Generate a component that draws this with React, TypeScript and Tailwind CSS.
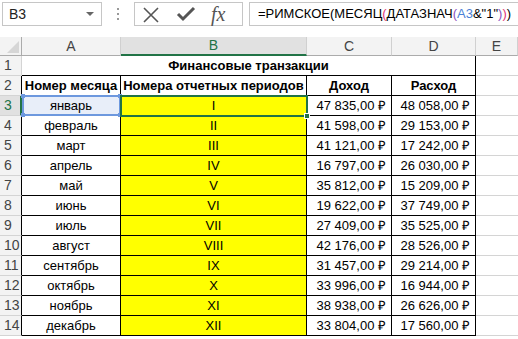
import React from 'react';

const rows = [
  { m: 'январь', r: 'I', inc: '47 835,00 ₽', exp: '48 058,00 ₽' },
  { m: 'февраль', r: 'II', inc: '41 598,00 ₽', exp: '29 153,00 ₽' },
  { m: 'март', r: 'III', inc: '41 121,00 ₽', exp: '17 242,00 ₽' },
  { m: 'апрель', r: 'IV', inc: '16 797,00 ₽', exp: '26 030,00 ₽' },
  { m: 'май', r: 'V', inc: '35 812,00 ₽', exp: '15 209,00 ₽' },
  { m: 'июнь', r: 'VI', inc: '19 622,00 ₽', exp: '37 749,00 ₽' },
  { m: 'июль', r: 'VII', inc: '27 409,00 ₽', exp: '35 525,00 ₽' },
  { m: 'август', r: 'VIII', inc: '42 176,00 ₽', exp: '28 526,00 ₽' },
  { m: 'сентябрь', r: 'IX', inc: '31 457,00 ₽', exp: '29 214,00 ₽' },
  { m: 'октябрь', r: 'X', inc: '33 996,00 ₽', exp: '16 944,00 ₽' },
  { m: 'ноябрь', r: 'XI', inc: '38 938,00 ₽', exp: '26 626,00 ₽' },
  { m: 'декабрь', r: 'XII', inc: '33 804,00 ₽', exp: '17 560,00 ₽' },
];

const font = { fontFamily: '"Liberation Sans", Arial, sans-serif' };

function FormulaBar() {
  return (
    <div className="h-[37px] bg-white flex items-start pt-[2px] pl-[2px]">
      <div className="shrink-0 w-[100px] h-[24px] border border-[#c6c6c6] flex items-center justify-between pl-[6px] pr-[7px] text-[14px] text-[#222]">
        <span>B3</span>
        <span className="w-0 h-0 border-l-[4px] border-r-[4px] border-t-[4px] border-l-transparent border-r-transparent border-t-[#666]" />
      </div>
      <div className="shrink-0 w-[32px] h-[24px] flex flex-col items-center justify-center gap-[3px]">
        <span className="w-[2px] h-[2px] bg-[#999]" />
        <span className="w-[2px] h-[2px] bg-[#999]" />
        <span className="w-[2px] h-[2px] bg-[#999]" />
      </div>
      <div className="shrink-0 w-[109px] h-[24px] border border-[#c6c6c6] flex items-center">
        <svg width="36" height="22" viewBox="0 0 36 22" className="shrink-0">
          <path d="M9 5 L23 19 M23 5 L9 19" stroke="#555" strokeWidth="1.6" fill="none" />
        </svg>
        <svg width="36" height="22" viewBox="0 0 36 22" className="shrink-0">
          <path d="M7 11 L12 16 L23 5" stroke="#555" strokeWidth="3" fill="none" />
        </svg>
        <span className="ml-[4px] text-[20px] leading-none italic text-[#555]" style={{ fontFamily: '"Liberation Serif", serif' }}>
          fx
        </span>
      </div>
      <div className="ml-[6px] flex-1 min-w-0 overflow-hidden h-[24px] border border-[#c6c6c6] border-r-0 flex items-center pl-[8px] text-[13px] text-black whitespace-nowrap">
        =РИМСКОЕ(МЕСЯЦ<span className="text-[#e2377a]">(</span>ДАТАЗНАЧ<span className="text-[#8c4fc0]">(</span>
        <span className="text-[#4a7fd6]">A3</span>&amp;"1"<span className="text-[#8c4fc0]">)</span>
        <span className="text-[#e2377a]">)</span>)
      </div>
    </div>
  );
}

export default function App() {
  const head = 'h-[19px] bg-[#f3f3f3] border-r border-b border-[#d0d0d0] border-b-[#ababab] flex items-center justify-center text-[14px] text-[#444]';
  const rowHead = 'h-[20px] bg-[#f3f3f3] border-b border-[#d4d4d4] flex items-center pl-[4px] text-[14px] text-[#444]';
  const cell = 'h-[20px] border-r border-b border-black flex items-center text-[13px] text-black whitespace-nowrap overflow-hidden';
  const gray = 'h-[20px] border-b border-[#d4d4d4]';

  return (
    <div className="w-[518px] h-[339px] bg-white overflow-hidden relative" style={font}>
      <FormulaBar />
      <div className="grid grid-cols-[22px_99px_186px_85px_84px_42px]">
        <div className="h-[19px] bg-[#f3f3f3] border-r border-b border-[#ababab] flex items-end justify-end pr-[2px] pb-[2px]">
          <svg width="12" height="12" viewBox="0 0 12 12">
            <path d="M12 0 L12 12 L0 12 Z" fill="#d6d6d6" />
          </svg>
        </div>
        <div className={head}>A</div>
        <div className="h-[19px] bg-[#e1e1e1] border-r border-[#d0d0d0] border-b-2 border-b-[#217346] flex items-center justify-center text-[14px] text-[#217346]">B</div>
        <div className={head}>C</div>
        <div className={head}>D</div>
        <div className={head}>E</div>

        <div className={`${rowHead} border-r border-r-[#d4d4d4]`}>1</div>
        <div className="col-span-4 h-[20px] border-r border-b border-black flex items-center justify-center text-[13px] font-bold text-black">
          Финансовые транзакции
        </div>
        <div className={gray} />

        <div className={`${rowHead} border-r border-r-black`}>2</div>
        <div className={`${cell} justify-center font-bold`}>Номер месяца</div>
        <div className={`${cell} justify-center font-bold`}>Номера отчетных периодов</div>
        <div className={`${cell} justify-center font-bold`}>Доход</div>
        <div className={`${cell} justify-center font-bold`}>Расход</div>
        <div className={gray} />

        {rows.map((r, i) => {
          const sel = i === 0;
          return (
            <React.Fragment key={r.m}>
              <div
                className={
                  sel
                    ? 'h-[20px] bg-[#e1e1e1] border-b border-[#d4d4d4] border-r-2 border-r-[#217346] flex items-center pl-[4px] text-[14px] text-[#217346]'
                    : `${rowHead} border-r border-r-black`
                }
              >
                {i + 3}
              </div>
              <div className={`${cell} justify-center ${sel ? 'bg-[#e8eef9]' : ''}`}>{r.m}</div>
              <div className={`${cell} justify-center bg-[#ffff00]`}>{r.r}</div>
              <div className={`${cell} justify-end pr-[5px]`}>{r.inc}</div>
              <div className={`${cell} justify-end pr-[5px]`}>{r.exp}</div>
              <div className={gray} />
            </React.Fragment>
          );
        })}
      </div>

      {/* reference highlight on A3 */}
      <div className="absolute left-[22px] top-[95px] w-[99px] h-[21px] border-2 border-[#6d98de] pointer-events-none">
        <span className="absolute -left-[3px] -top-[3px] w-[4px] h-[4px] bg-[#6d98de]" />
        <span className="absolute -right-[3px] -top-[3px] w-[4px] h-[4px] bg-[#6d98de]" />
        <span className="absolute -left-[3px] -bottom-[3px] w-[4px] h-[4px] bg-[#6d98de]" />
        <span className="absolute -right-[3px] -bottom-[3px] w-[4px] h-[4px] bg-[#6d98de]" />
      </div>
      {/* active cell B3 */}
      <div className="absolute left-[120px] top-[95px] w-[188px] h-[22px] border-2 border-[#217346] pointer-events-none">
        <span className="absolute -right-[4px] -bottom-[4px] w-[6px] h-[6px] bg-[#217346] border border-white" />
      </div>
    </div>
  );
}
